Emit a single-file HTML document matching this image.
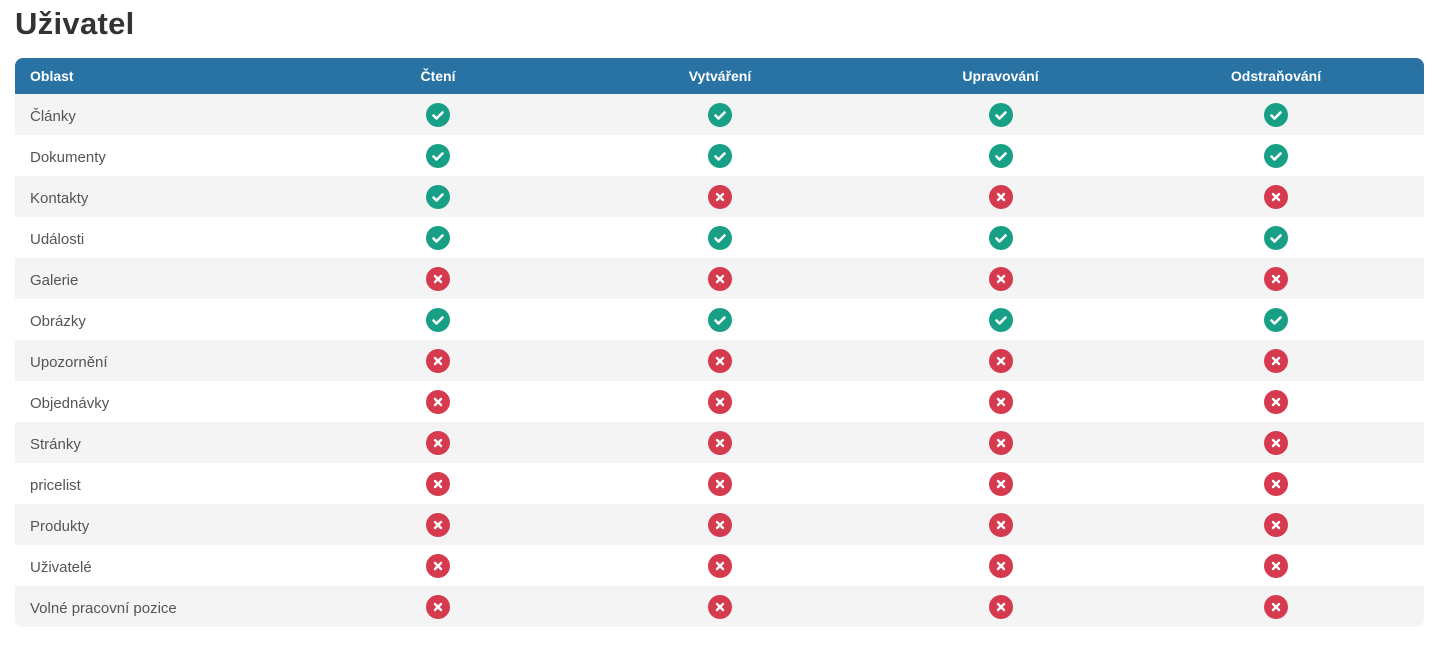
<!DOCTYPE html>
<html><head><meta charset="utf-8"><style>
body{margin:0;background:#fff;font-family:"Liberation Sans",sans-serif;width:1443px;height:656px;overflow:hidden}
h1{position:absolute;left:15px;top:6px;margin:0;font-size:31px;font-weight:bold;color:#333;letter-spacing:0.3px}
table{position:absolute;left:15px;top:58px;border-collapse:separate;border-spacing:0;width:1409px;table-layout:fixed}
th{background:#2872a4;color:#fff;font-size:14px;font-weight:bold;height:36px;padding:0;text-align:center;vertical-align:middle}
th:first-child{text-align:left;padding-left:15px;border-top-left-radius:8px}
th:last-child{border-top-right-radius:8px;padding-right:12px}
td{height:41px;padding:0;text-align:center;font-size:15px;color:#555;vertical-align:middle}
td:last-child{padding-right:12px}
td:first-child{text-align:left;padding-left:15px}
td:first-child span{position:relative;top:2px}
tr:nth-child(odd) td{background:#f4f4f4}
tr:last-child td:first-child{border-bottom-left-radius:8px}
tr:last-child td:last-child{border-bottom-right-radius:8px}
.i{display:block;margin:0 auto;width:24px;height:24px;border-radius:50%}
.y{background:#17a085}.n{background:#d63a4f}
.i svg{display:block}
</style></head><body>
<h1>Uživatel</h1>
<table>
<colgroup><col style="width:282px"><col style="width:282px"><col style="width:282px"><col style="width:279px"><col style="width:284px"></colgroup>
<thead><tr><th>Oblast</th><th>Čtení</th><th>Vytváření</th><th>Upravování</th><th>Odstraňování</th></tr></thead>
<tbody id="b"></tbody>
</table>
<script>
var Y='<div class="i y"><svg width="24" height="24"><path d="M7.5 12.5l3 3 6-6" stroke="#fff" stroke-width="2.6" fill="none" stroke-linecap="round" stroke-linejoin="round"/></svg></div>';
var N='<div class="i n"><svg width="24" height="24"><path d="M9 9l6 6M15 9l-6 6" stroke="#fff" stroke-width="2.4" stroke-linecap="round"/></svg></div>';
var rows=[["Články",1,1,1,1],["Dokumenty",1,1,1,1],["Kontakty",1,0,0,0],["Události",1,1,1,1],["Galerie",0,0,0,0],["Obrázky",1,1,1,1],["Upozornění",0,0,0,0],["Objednávky",0,0,0,0],["Stránky",0,0,0,0],["pricelist",0,0,0,0],["Produkty",0,0,0,0],["Uživatelé",0,0,0,0],["Volné pracovní pozice",0,0,0,0]];
var h='';rows.forEach(function(r){h+='<tr><td><span>'+r[0]+'</span></td>';for(var i=1;i<5;i++)h+='<td>'+(r[i]?Y:N)+'</td>';h+='</tr>';});
document.getElementById('b').innerHTML=h;
</script>
</body></html>
